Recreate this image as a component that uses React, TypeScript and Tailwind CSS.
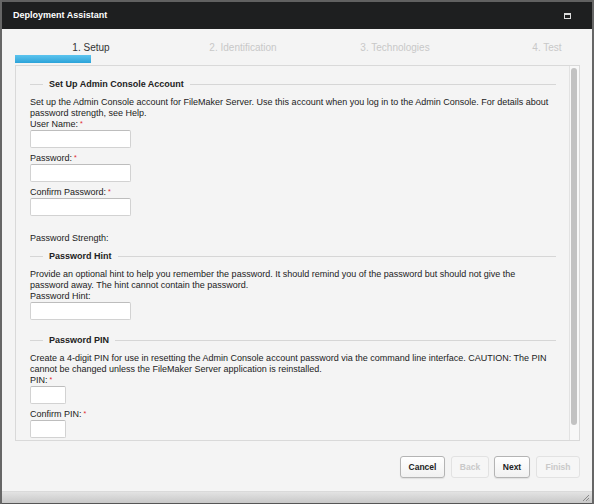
import React from 'react';

function Req() {
  return <span className="text-[#e0242b] text-[7px] align-top relative top-[-1px] ml-[2px]">*</span>;
}

function Legend({ title }: { title: string }) {
  return (
    <div className="flex items-center h-[12px]">
      <div className="w-[13px] h-px bg-[#d6d6d6]" />
      <span className="px-[6px] text-[9px] font-bold text-[#222]">{title}</span>
      <div className="flex-1 h-px bg-[#d6d6d6]" />
    </div>
  );
}

function Field({ label, req, w = 'w-[101px]', mt = 'mt-0' }: { label: string; req?: boolean; w?: string; mt?: string }) {
  return (
    <div className={mt}>
      <div className="h-[11px] leading-[11px]">
        {label}
        {req && <Req />}
      </div>
      <div className={`${w} h-[18px] bg-white border border-[#d2d2d2] border-t-[#bdbdbd] rounded-[2px]`} />
    </div>
  );
}

function Btn({ label, w, disabled, ml }: { label: string; w: string; disabled?: boolean; ml: string }) {
  return (
    <button
      className={`${w} ${ml} h-[22px] rounded-[3px] border text-[8.5px] font-bold ${
        disabled
          ? 'border-[#e2e2e2] bg-[#f6f6f6] text-[#c9c9c9]'
          : 'border-[#b4b4b4] bg-gradient-to-b from-white to-[#f1f1f1] text-[#222] shadow-[0_1px_1px_rgba(0,0,0,0.08)]'
      }`}
    >
      {label}
    </button>
  );
}

export default function App() {
  const steps = ['1. Setup', '2. Identification', '3. Technologies', '4. Test'];
  return (
    <div className="w-[594px] h-[504px] flex flex-col bg-[#f4f4f4] border-x-2 border-[#666] font-['Liberation_Sans',Arial,sans-serif] text-[#222] overflow-hidden">
      {/* title bar */}
      <div className="h-[29px] shrink-0 border-t-2 border-[#616161] bg-[#1e1f20] flex items-center pl-[11px] pr-[21px]">
        <span className="text-white text-[9px] font-bold flex-1">Deployment Assistant</span>
        <div className="w-[7px] h-[6px] border border-t-2 border-[#dcdcdc]" />
      </div>

      {/* steps */}
      <div className="h-[26px] shrink-0 flex pl-[13px] pt-[13px] text-[10px] leading-[12px]">
        {steps.map((s, i) => (
          <div key={s} className={`w-[152px] shrink-0 text-center ${i === 0 ? 'text-[#333]' : 'text-[#c8c8c8]'}`}>
            {s}
          </div>
        ))}
      </div>
      <div className="ml-[13px] w-[76px] h-[8px] shrink-0 bg-gradient-to-b from-[#5cc4ee] to-[#2aa3d9]" />

      {/* panel */}
      <div className="ml-[13px] mt-[2px] w-[565px] h-[376px] shrink-0 border border-[#d9d9d9] flex overflow-hidden">
        <div className="flex-1 pl-[14px] pr-[13px] pt-[12px] text-[9px] leading-[11px] overflow-hidden">
          <Legend title="Set Up Admin Console Account" />
          <p className="mt-[7px]">
            Set up the Admin Console account for FileMaker Server. Use this account when you log in to the Admin Console. For details about password strength, see Help.
          </p>
          <Field label="User Name:" req />
          <Field label="Password:" req mt="mt-[5px]" />
          <Field label="Confirm Password:" req mt="mt-[5px]" />
          <div className="mt-[17px] h-[11px]">Password Strength:</div>

          <div className="mt-[6px]">
            <Legend title="Password Hint" />
          </div>
          <p className="mt-[7px]">
            Provide an optional hint to help you remember the password. It should remind you of the password but should not give the password away. The hint cannot contain the password.
          </p>
          <Field label="Password Hint:" />

          <div className="mt-[14px]">
            <Legend title="Password PIN" />
          </div>
          <p className="mt-[7px]">
            Create a 4-digit PIN for use in resetting the Admin Console account password via the command line interface. CAUTION: The PIN cannot be changed unless the FileMaker Server application is reinstalled.
          </p>
          <Field label="PIN:" req w="w-[36px]" />
          <Field label="Confirm PIN:" req w="w-[36px]" mt="mt-[5px]" />
        </div>
        <div className="w-[10px] shrink-0 border-l border-[#e2e2e2] bg-[#f8f8f8]">
          <div className="ml-[1px] mt-[2px] w-[6px] h-[357px] rounded-full bg-[#c2c2c2]" />
        </div>
      </div>

      {/* buttons */}
      <div className="mt-[15px] flex justify-end pr-[12px] shrink-0">
        <Btn label="Cancel" w="w-[45px]" ml="ml-0" />
        <Btn label="Back" w="w-[38px]" ml="ml-[6px]" disabled />
        <Btn label="Next" w="w-[36px]" ml="ml-[5px]" />
        <Btn label="Finish" w="w-[44px]" ml="ml-[6px]" disabled />
      </div>

      {/* footer */}
      <div className="mt-auto h-[13px] shrink-0 border-t border-[#dadada] border-b border-b-[#555] bg-gradient-to-b from-[#e3e3e3] to-[#c8c8c8] flex justify-end items-end pr-[2px] pb-[1px]">
        <svg width="8" height="8" viewBox="0 0 8 8">
          <path d="M7 1 L1 7 M7 4 L4 7 M7 6.5 L6.5 7" stroke="#8a8a8a" strokeWidth="1" />
        </svg>
      </div>
    </div>
  );
}
